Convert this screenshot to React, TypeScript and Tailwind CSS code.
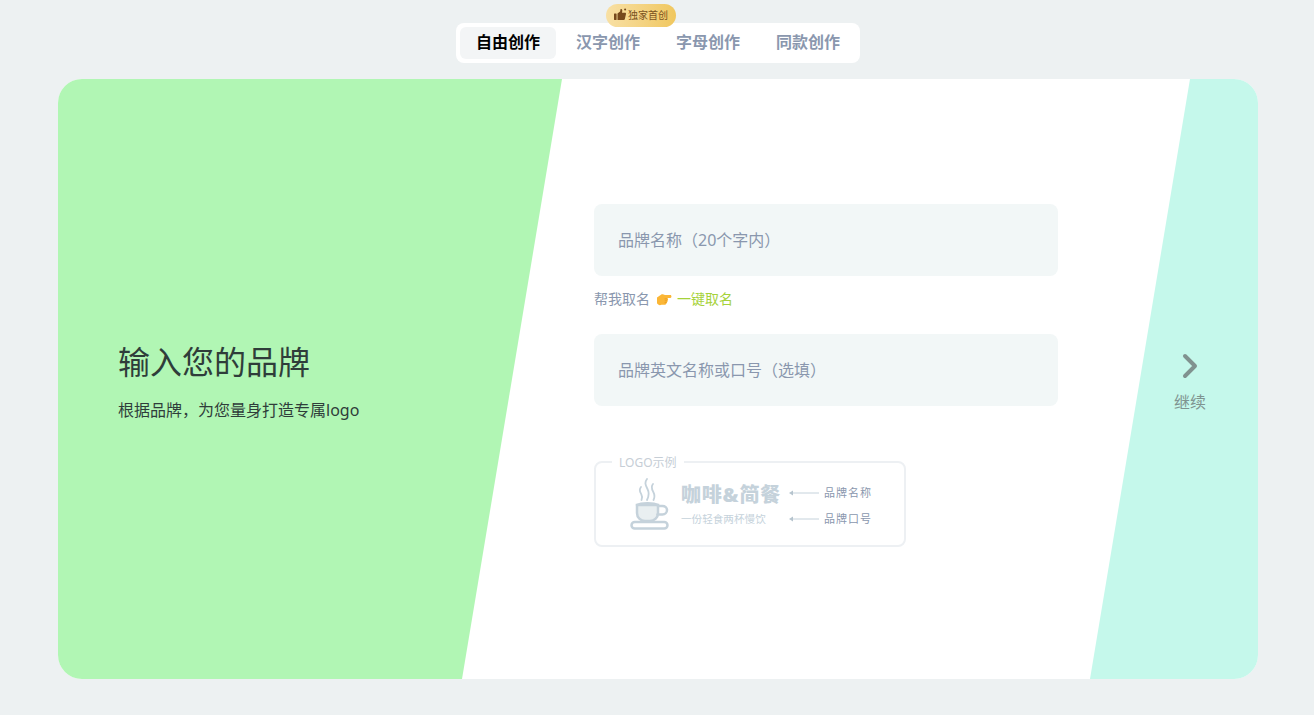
const FONT = "font-['Noto_Sans','Noto_Sans_CJK_SC',sans-serif]";

const tabs = ["自由创作", "汉字创作", "字母创作", "同款创作"];

const ThumbIcon = () => (
  <svg width="14" height="13" viewBox="0 0 13 13" fill="#76491c">
    <rect x="0.5" y="5.5" width="2.6" height="6.5" rx="0.4" />
    <path d="M4 5.6 6.6 3.4 7 1.2c.9-.3 1.9.3 1.8 1.6L8.5 4.8h3c.8 0 1.2.6 1 1.3l-1.2 5.1c-.2.5-.5.8-1.1.8H4z" />
    <circle cx="11.6" cy="1.6" r="1" />
  </svg>
);

const PointIcon = () => (
  <svg width="16" height="15" viewBox="0 0 16 14">
    <path d="M1 5 5 2.200c.8-.6 1.700-.6 2.500-.3l1.500.7h5.400c1.400 0 1.400 2.900 0 2.900H11.500l.4.9c.3.7.1 1.300-.3 1.600.2.700 0 1.300-.5 1.600.1.700-.2 1.200-.8 1.400-.3.900-.9 1.300-1.700 1.300H5.500C3.500 13.300 2 12.300 1 10.800z" fill="#fbb636" />
    <path d="M8.600 6.400h2.700M8.800 8.300h2.300M8.600 10.100h1.800" stroke="#e2951a" strokeWidth="0.7" fill="none" />
  </svg>
);

const CupIcon = () => (
  <svg width="42" height="52" viewBox="0 0 42 52" fill="none" stroke="#c5d2db" strokeLinecap="round">
    <path d="M18 1c-3 4-1 7 .5 10s1.500 7-.5 11" strokeWidth="1.800" />
    <path d="M12 9c-2.500 3-1 5 .2 7s1 4 .3 6" strokeWidth="1.800" />
    <path d="M24 6c-2.500 3-1 5.500.3 8s1.500 5.500.2 8" strokeWidth="1.800" />
    <path d="M8 27h21v8c0 4.500-3.500 8-8 8h-5c-4.500 0-8-3.500-8-8z" fill="#e9eff1" strokeWidth="2.500" />
    <path d="M8 27c4-2.500 17-2.500 21 0" strokeWidth="2.500" />
    <path d="M29 28h4.500c2.500 0 4.500 1.700 4.500 4s-2 4.500-4.500 4.500h-5" strokeWidth="2.500" />
    <rect x="2.500" y="44" width="36" height="6.500" rx="3.250" strokeWidth="2.500" />
  </svg>
);

const ArrowLine = () => (
  <svg width="30" height="6" viewBox="0 0 30 6" className="shrink-0">
    <path d="M3 3h27" stroke="#c5d2db" strokeWidth="1" />
    <path d="M0 3l4-2.500v5z" fill="#b6c4ce" />
  </svg>
);

const LogoExample = () => (
  <div className="relative mt-[55px] flex h-[86px] w-[312px] items-center rounded-lg border-2 border-[#edf0f3] pl-[33px]">
    <span className="absolute -top-[8px] left-[16px] bg-white px-[7px] text-xs leading-[16px] text-[#c6ced6]">
      LOGO示例
    </span>
    <CupIcon />
    <div className="ml-[10px] mt-[1px] flex w-[109px] flex-col">
      <span className="text-xl leading-[26px] font-black tracking-[0.8px] text-[#c5d2db]">咖啡&简餐</span>
      <span className="mt-[2px] text-[10.6px] leading-[18px] text-[#c5d2db]">一份轻食两杯慢饮</span>
    </div>
    <div className="-ml-[1px] mt-[3px] flex flex-col gap-[8px]">
      <div className="flex items-center gap-[5px] text-[11px] leading-[18px] tracking-[1px] text-[#8a97ae]">
        <ArrowLine />
        品牌名称
      </div>
      <div className="flex items-center gap-[5px] text-[11px] leading-[18px] tracking-[1px] text-[#8a97ae]">
        <ArrowLine />
        品牌口号
      </div>
    </div>
  </div>
);

export default function App() {
  return (
    <div className={`${FONT} h-[715px] overflow-hidden bg-[#edf1f2]`}>
      {/* Tabs */}
      <div className="flex justify-center pl-[2px] pt-[23px]">
        <div className="relative flex h-10 w-[404px] gap-1 rounded-lg bg-white p-1">
          {tabs.map((tab, i) => (
            <div
              key={tab}
              className={`flex w-24 items-center justify-center rounded-md pb-[2px] text-base leading-6 font-bold ${
                i === 0 ? "bg-[#f3f5f6] text-black" : "text-[#8a97ae]"
              }`}
            >
              {tab}
            </div>
          ))}
          {/* Badge */}
          <div className="absolute -top-[19px] left-[150px] flex h-[23px] w-[70px] items-center justify-center gap-px rounded-full bg-gradient-to-r from-[#f8e0a4] to-[#f0c75e] pb-[2px] pr-[1px] text-[10px] leading-[14px] text-[#7a5220]">
            <ThumbIcon />
            独家首创
          </div>
        </div>
      </div>

      {/* Card */}
      <div className="relative ml-[58px] mt-4 flex h-[600px] w-[1200px] items-center overflow-hidden rounded-3xl bg-white">
        <div className="absolute inset-0 bg-[#b1f6b4] [clip-path:polygon(0_0,504px_0,404px_100%,0_100%)]" />
        <div className="absolute inset-0 bg-[#c5f8eb] [clip-path:polygon(1132px_0,100%_0,100%_100%,1032px_100%)]" />

        <div className="relative mt-[5px] flex w-[536px] flex-col pl-[60px] text-[#2f3d3a]">
          <h1 className="text-[32px] leading-[44px] font-normal">输入您的品牌</h1>
          <p className="mb-px mt-[14px] text-base leading-6">根据品牌，为您量身打造专属logo</p>
        </div>

        <div className="relative -mt-[7px] flex w-[464px] flex-col">
          <input
            placeholder="品牌名称（20个字内）"
            className="h-[72px] w-full rounded-lg bg-[#f2f7f7] px-6 text-base outline-none placeholder:text-[#8a97ae]"
          />
          <div className="mt-[13px] flex h-[20px] items-center text-sm text-[#8a97ae]">
            帮我取名
            <span className="ml-[6px] mr-[5px] flex"><PointIcon /></span>
            <span className="text-[#a6d23a]">一键取名</span>
          </div>
          <input
            placeholder="品牌英文名称或口号（选填）"
            className="mt-[25px] h-[72px] w-full rounded-lg bg-[#f2f7f7] px-6 text-base outline-none placeholder:text-[#8a97ae]"
          />
          <LogoExample />
        </div>

        <div className="relative mt-[9px] flex flex-1 flex-col items-center pl-16 text-[#7f9490]">
          <svg width="20" height="28" viewBox="0 0 20 28" fill="none" stroke="#80928f" strokeWidth="4" strokeLinecap="round" strokeLinejoin="round">
            <path d="M5 4l10 10-10 10" />
          </svg>
          <span className="mb-px mt-[10px] text-base leading-6">继续</span>
        </div>
      </div>
    </div>
  );
}
